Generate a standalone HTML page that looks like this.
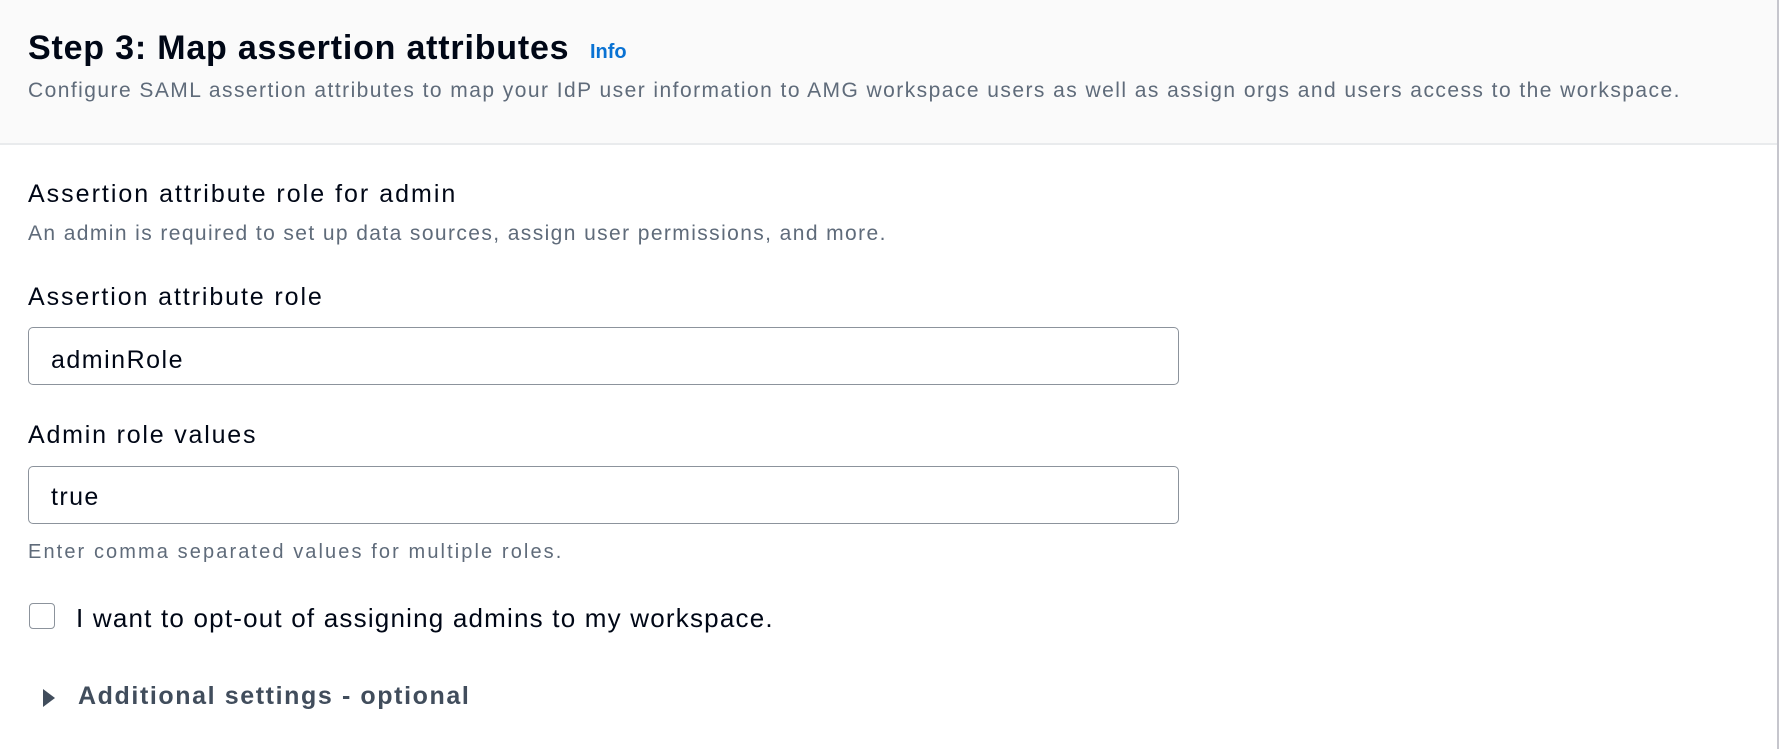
<!DOCTYPE html>
<html><head><meta charset="utf-8"><style>
*{margin:0;padding:0;box-sizing:border-box}
body{width:1782px;height:749px;background:#fff;font-family:"Liberation Sans",sans-serif;color:#000716;position:relative;overflow:hidden}
.hdr{position:absolute;left:0;top:0;width:1778px;height:145px;background:#fafafa;border-bottom:2px solid #e9ebed}
.rb{position:absolute;left:1777px;top:0;width:2px;height:749px;background:#c6c6cd}
.t{position:absolute;white-space:nowrap;line-height:1}
.inp{position:absolute;left:28px;width:1151px;height:58px;border:1.5px solid #8c939c;border-radius:5px;background:#fff}
</style></head><body>
<div class="hdr"></div>
<div class="rb"></div>
<div class="t" style="left:28px;top:31px;font-size:34px;font-weight:bold;letter-spacing:0.8px">Step 3: Map assertion attributes</div>
<div class="t" style="left:590px;top:42px;font-size:20px;font-weight:bold;color:#0972d3">Info</div>
<div class="t" style="left:28px;top:80px;font-size:21px;letter-spacing:1.45px;color:#5f6b7a">Configure SAML assertion attributes to map your IdP user information to AMG workspace users as well as assign orgs and users access to the workspace.</div>
<div class="t" style="left:28px;top:182px;font-size:25px;letter-spacing:2px">Assertion attribute role for admin</div>
<div class="t" style="left:28px;top:223px;font-size:21px;letter-spacing:1.4px;color:#5f6b7a">An admin is required to set up data sources, assign user permissions, and more.</div>
<div class="t" style="left:28px;top:285px;font-size:25px;letter-spacing:1.9px">Assertion attribute role</div>
<div class="inp" style="top:327px"></div>
<div class="t" style="left:51px;top:348px;font-size:25px;letter-spacing:1.5px">adminRole</div>
<div class="t" style="left:28px;top:423px;font-size:25px;letter-spacing:1.8px">Admin role values</div>
<div class="inp" style="top:466px"></div>
<div class="t" style="left:51px;top:485px;font-size:25px;letter-spacing:1.4px">true</div>
<div class="t" style="left:28px;top:542px;font-size:20px;letter-spacing:2.1px;color:#5f6b7a">Enter comma separated values for multiple roles.</div>
<div style="position:absolute;left:29px;top:603px;width:26px;height:26px;border:1.5px solid #8c939c;border-radius:4px"></div>
<div class="t" style="left:76px;top:605px;font-size:26px;letter-spacing:1.2px">I want to opt-out of assigning admins to my workspace.</div>
<svg style="position:absolute;left:42px;top:688px" width="14" height="20" viewBox="0 0 14 20"><path d="M1 1 L13 10 L1 19 Z" fill="#414d5c"/></svg>
<div class="t" style="left:78px;top:684px;font-size:25px;font-weight:bold;letter-spacing:1.6px;color:#414d5c">Additional settings - optional</div>
</body></html>
